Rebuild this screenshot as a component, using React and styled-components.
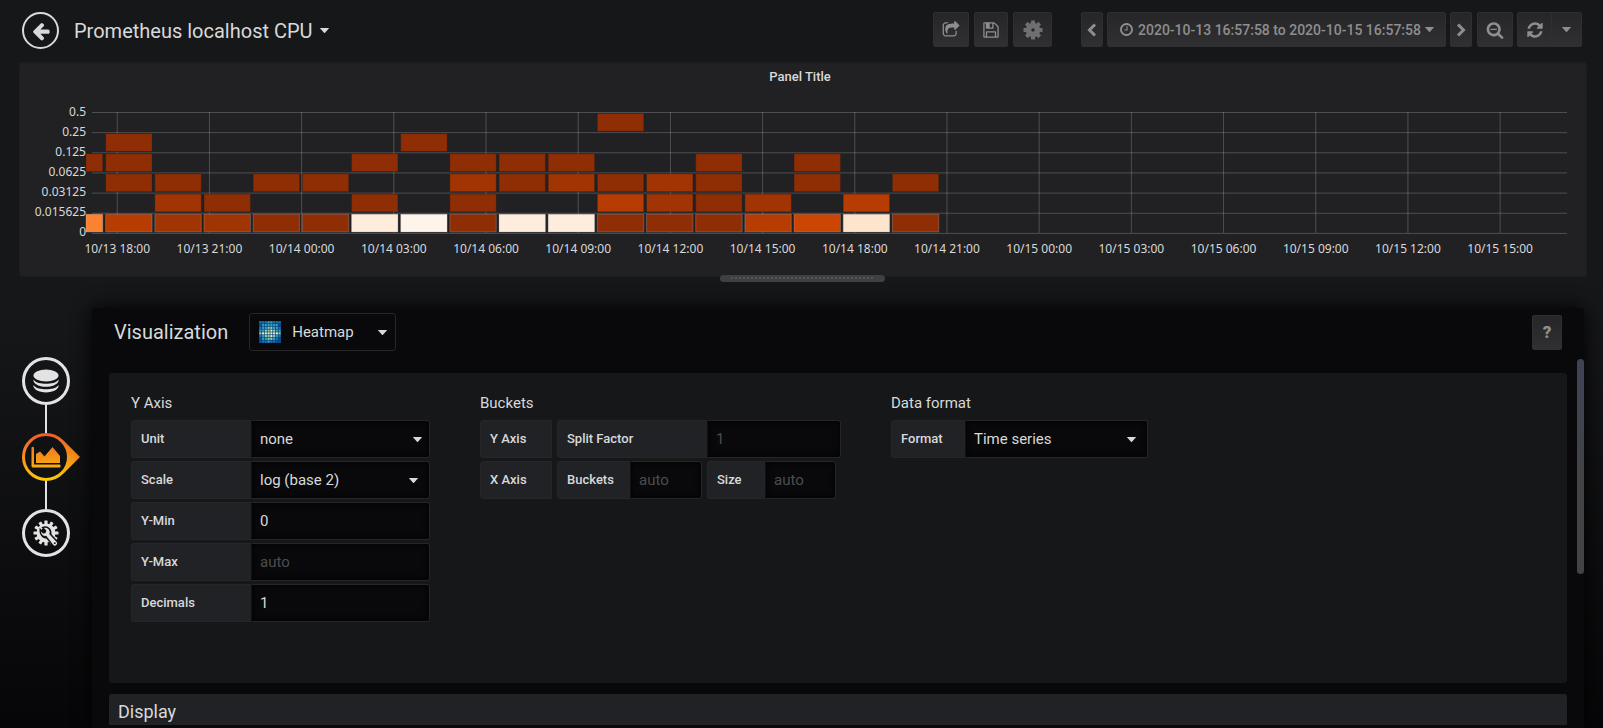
import React from "react";
import styled, { createGlobalStyle, css } from "styled-components";

const GlobalStyle = createGlobalStyle`
  *, *::before, *::after {
    box-sizing: border-box;
  }
  body {
    margin: 0;
    background: #161719;
    color: #d8d9da;
    font-family: Roboto, "Liberation Sans", sans-serif;
    font-size: 13px;
  }
  button, input, select {
    font-family: inherit;
    margin: 0;
  }
`;

const Page = styled.div`
  min-height: 100vh;
  display: flex;
  flex-direction: column;
`;

/* toolbar */

const Toolbar = styled.header`
  display: flex;
  align-items: flex-start;
  padding: 12px 21px 13px 22px;
`;

const BackButton = styled.button`
  width: 37px;
  height: 37px;
  padding: 0;
  display: flex;
  align-items: center;
  justify-content: center;
  border: 2px solid #d8d9da;
  border-radius: 50%;
  background: transparent;
  color: #d8d9da;
`;

const DashboardTitle = styled.button`
  display: flex;
  align-items: center;
  gap: 7px;
  height: 37px;
  margin-left: 15px;
  padding: 0;
  border: 0;
  background: transparent;
  color: #d8d9da;
  font-size: 20px;
`;

const ToolbarActions = styled.div`
  display: flex;
  gap: 5px;
  margin-left: auto;
`;

const TimeControls = styled.div`
  display: flex;
  gap: 4px;
  margin-left: 24px;
`;

const RefreshControls = styled.div`
  display: flex;
  gap: 4px;
`;

const ToolButton = styled.button`
  display: flex;
  align-items: center;
  justify-content: center;
  gap: 4px;
  height: 35px;
  width: ${({ $width }) => ($width ? `${$width}px` : "auto")};
  padding: 0;
  border: 1px solid #2f2f32;
  border-radius: 2px;
  background: linear-gradient(180deg, #262628, #303032);
  color: #8e8e8e;
  font-size: 14px;
  font-weight: 500;

  svg {
    flex: none;
  }
`;

const ButtonGroup = styled.div`
  display: flex;

  ${ToolButton}:first-child {
    border-radius: 2px 0 0 2px;
  }
  ${ToolButton}:last-child {
    border-left: 0;
    border-radius: 0 2px 2px 0;
  }
`;

/* graph panel */

const Panel = styled.section`
  position: relative;
  margin: 0 16px 0 19px;
  padding: 5px 19px 5px 13px;
  border: 1px solid #1d1d1f;
  border-radius: 3px;
  background: #212124;
`;

const PanelTitle = styled.h2`
  margin: 0 0 16px;
  font-size: 13px;
  font-weight: 500;
  line-height: 18px;
  text-align: center;
`;

const Chart = styled.div`
  display: flex;
  font-family: "Noto Sans", "Open Sans", sans-serif;
  font-size: 12px;
`;

const YLabels = styled.div`
  display: flex;
  flex-direction: column;
  width: 53px;
  line-height: 20px;
  text-align: right;
`;

const Plot = styled.svg`
  flex: 1;
  min-width: 0;
  height: 159px;
  margin-top: 10px;
  overflow: visible;

  text {
    fill: #d8d9da;
    text-anchor: middle;
  }
  line {
    stroke: #d8d9da;
    stroke-opacity: 0.25;
  }
`;

const ResizeHandle = styled.div`
  position: absolute;
  left: 50%;
  bottom: -6px;
  width: 165px;
  height: 7px;
  margin-left: -83px;
  padding: 2px 11px;
  border-radius: 4px;
  background: #3f4042;

  &::before {
    content: "";
    display: block;
    height: 2px;
    background: repeating-linear-gradient(90deg, #545557 0 2px, transparent 2px 4px);
  }
`;

/* editor */

const Editor = styled.main`
  flex: 1;
  display: flex;
  margin-top: 31px;
  background: linear-gradient(180deg, #161719, #060608);
`;

const Rail = styled.nav`
  width: 92px;
  padding: 49px 0 0 22px;
  display: flex;
  flex-direction: column;
`;

const RailLine = styled.span`
  width: 2px;
  height: 28px;
  margin-left: 23px;
  background: #e3e3e3;
`;

const RailButton = styled.button`
  position: relative;
  width: 48px;
  height: 48px;
  padding: 0;
  display: flex;
  align-items: center;
  justify-content: center;
  border: ${({ $active }) => ($active ? "0" : "3px solid #e3e3e3")};
  border-radius: 50%;
  background: transparent;
  color: #e3e3e3;

  svg {
    flex: none;
  }
`;

const ActiveMark = styled.svg`
  position: absolute;
  left: 0;
  top: 0;
`;

const EditorBody = styled.div`
  position: relative;
  flex: 1;
  min-width: 0;
  margin-right: 19px;
  padding: 5px 17px 2px;
  border-radius: 3px 3px 0 0;
  background: #09090b;
  box-shadow: 0 0 20px #000;
`;

const EditorHeader = styled.div`
  display: flex;
  align-items: center;
  height: 38px;
  margin-bottom: 22px;
  padding: 0 5px;
`;

const EditorTitle = styled.h1`
  margin: 0;
  font-size: 20px;
  font-weight: 400;
`;

const VizPicker = styled.button`
  display: flex;
  align-items: center;
  width: 147px;
  height: 38px;
  margin-left: 21px;
  padding: 0 8px;
  border: 1px solid #262628;
  border-radius: 3px;
  background: #09090b;
  color: #d8d9da;
  font-size: 15px;

  span {
    flex: 1;
    margin-left: 10px;
    text-align: left;
  }
`;

const HelpButton = styled(ToolButton)`
  margin-left: auto;
  font-size: 17px;
  font-weight: 900;
`;

const ScrollThumb = styled.div`
  position: absolute;
  top: 51px;
  right: 0;
  width: 7px;
  height: 215px;
  border-radius: 4px;
  background: linear-gradient(180deg, #404357, #424345 60%);
`;

const OptionsBox = styled.section`
  display: flex;
  flex-wrap: wrap;
  align-items: flex-start;
  gap: 24px 50px;
  padding: 20px 22px 61px;
  border-radius: 3px;
  background: #161719;
`;

const Group = styled.fieldset`
  display: flex;
  flex-direction: column;
  gap: 3px;
  min-width: 0;
  margin: 0;
  padding: 0;
  border: 0;
`;

const GroupTitle = styled.legend`
  margin-bottom: 7px;
  padding: 0;
  font-size: 15px;
  line-height: 20px;
`;

const Row = styled.div`
  display: flex;
  gap: 5px;
`;

const Field = styled.div`
  display: flex;
  height: 38px;
`;

const labelStyle = css`
  width: ${({ $width }) => $width}px;
  height: 38px;
  padding-left: 9px;
  border: 1px solid #262628;
  border-radius: 3px 0 0 3px;
  background: #212226;
  font-size: 13px;
  font-weight: 500;
  line-height: 36px;
`;

const FieldLabel = styled.label`
  ${labelStyle}
  border-right: 0;
`;

const RowLabel = styled.span`
  ${labelStyle}
`;

const controlStyle = css`
  width: ${({ $width }) => $width}px;
  height: 38px;
  padding: 0 8px;
  border: 1px solid #262628;
  border-left-color: #111113;
  border-radius: 0 3px 3px 0;
  outline: 0;
  background: #09090b;
  box-shadow: inset 0 0 6px #000;
  color: #d8d9da;
  font-size: 15px;
`;

const TextInput = styled.input`
  ${controlStyle}

  &::placeholder {
    color: #4c4d50;
    opacity: 1;
  }
`;

const Select = styled.select`
  ${controlStyle}
  appearance: none;
`;

const SelectWrap = styled.div`
  position: relative;

  svg {
    position: absolute;
    right: ${({ $inset }) => $inset}px;
    top: 17px;
    pointer-events: none;
  }
`;

const SectionBar = styled.button`
  display: block;
  width: 100%;
  height: 31px;
  margin-top: 11px;
  padding: 4px 9px 0;
  border: 0;
  border-radius: 3px 3px 0 0;
  background: #212226;
  color: #d8d9da;
  font-size: 18px;
  line-height: 26px;
  text-align: left;
`;

/* icons */

const icons = {
  arrowLeft:
    "M1664 896v128q0 53-32.5 90.5t-84.5 37.5h-704l293 294q38 36 38 90t-38 90l-75 76q-37 37-90 37-52 0-91-37l-651-652q-37-37-37-90 0-52 37-91l651-650q38-38 91-38 52 0 90 38l75 74q38 38 38 91t-38 91l-293 293h704q52 0 84.5 37.5t32.5 90.5z",
  share:
    "M1472 989v259q0 119-84.5 203.5t-203.5 84.5h-832q-119 0-203.5-84.5t-84.5-203.5v-832q0-119 84.5-203.5t203.5-84.5h255q13 0 22.5 9.5t9.5 22.5q0 27-26 32-77 26-133 60-10 4-16 4h-112q-66 0-113 47t-47 113v832q0 66 47 113t113 47h832q66 0 113-47t47-113v-214q0-19 18-29 28-13 54-37 16-16 35-8 21 9 21 29zm237-496l-384 384q-18 19-45 19-12 0-25-5-39-17-39-59v-192h-160q-323 0-438 131-119 137-74 473 3 23-20 34-8 2-12 2-16 0-26-13-10-14-21-31t-39.5-68.5-49.5-99.5-38.5-114-17.5-122q0-49 3.5-91t14-90 28-88 47-81.5 68.5-74 94.5-61.5 124.5-48.5 159.5-30.5 196.5-11h160v-192q0-42 39-59 13-5 25-5 26 0 45 19l384 384q19 19 19 45t-19 45z",
  save:
    "M512 1536h768v-384h-768v384zm896 0h128v-896q0-14-10-38.5t-20-34.5l-281-281q-10-10-34-20t-39-10v416q0 40-28 68t-68 28h-576q-40 0-68-28t-28-68v-416h-128v1280h128v-416q0-40 28-68t68-28h832q40 0 68 28t28 68v416zm-384-928v-320q0-13-9.5-22.5t-22.5-9.5h-192q-13 0-22.5 9.5t-9.5 22.5v320q0 13 9.5 22.5t22.5 9.5h192q13 0 22.5-9.5t9.5-22.5zm640 32v928q0 40-28 68t-68 28h-1344q-40 0-68-28t-28-68v-1344q0-40 28-68t68-28h928q40 0 88 20t76 48l280 280q28 28 48 76t20 88z",
  clock:
    "M1024 544v448q0 14-9 23t-23 9h-320q-14 0-23-9t-9-23v-64q0-14 9-23t23-9h224v-352q0-14 9-23t23-9h64q14 0 23 9t9 23zm416 352q0-148-73-273t-198-198-273-73-273 73-198 198-73 273 73 273 198 198 273 73 273-73 198-198 73-273zm224 0q0 209-103 385.5t-279.5 279.5-385.5 103-385.5-103-279.5-279.5-103-385.5 103-385.5 279.5-279.5 385.5-103 385.5 103 279.5 279.5 103 385.5z",
  zoomOut:
    "M1088 800v64q0 13-9.5 22.5t-22.5 9.5h-576q-13 0-22.5-9.5t-9.5-22.5v-64q0-13 9.5-22.5t22.5-9.5h576q13 0 22.5 9.5t9.5 22.5zm128 32q0-185-131.5-316.5t-316.5-131.5-316.5 131.5-131.5 316.5 131.5 316.5 316.5 131.5 316.5-131.5 131.5-316.5zm512 832q0 53-37.5 90.5t-90.5 37.5q-54 0-90-38l-343-342q-179 124-399 124-143 0-273.5-55.5t-225-150-150-225-55.5-273.5 55.5-273.5 150-225 225-150 273.5-55.5 273.5 55.5 225 150 150 225 55.5 273.5q0 220-124 399l343 343q37 37 37 90z",
  refresh:
    "M1639 1056q0 5-1 7-64 268-268 434.5t-478 166.5q-146 0-282.5-55t-243.5-157l-129 129q-19 19-45 19t-45-19-19-45v-448q0-26 19-45t45-19h448q26 0 45 19t19 45-19 45l-137 137q71 66 161 102t187 36q134 0 250-65t186-179q11-17 53-117 8-23 30-23h192q13 0 22.5 9.5t9.5 22.5zm25-800v448q0 26-19 45t-45 19h-448q-26 0-45-19t-19-45 19-45l138-138q-148-137-349-137-134 0-250 65t-186 179q-11 17-53 117-8 23-30 23h-199q-13 0-22.5-9.5t-9.5-22.5v-7q65-268 270-434.5t480-166.5q146 0 284 55.5t245 156.5l130-129q19-19 45-19t45 19 19 45z",
};

const Icon = ({ name, size = 18 }) => (
  <svg width={size} height={size} viewBox="0 0 1792 1792" fill="currentColor" aria-hidden="true">
    <path d={icons[name]} />
  </svg>
);

const Caret = () => (
  <svg width="9" height="5" viewBox="0 0 9 5" fill="currentColor" aria-hidden="true">
    <path d="M0.5 0h8q.7 0 .3.6L5 4.7q-.5.5-1 0L.2.6Q-.2 0 .5 0z" />
  </svg>
);

const Chevron = ({ flip }) => (
  <svg width="10" height="14" viewBox="0 0 10 14" fill="none" stroke="currentColor" strokeWidth="3" aria-hidden="true">
    <path d={flip ? "M2 1.500L7.500 7L2 12.500" : "M8 1.500L2.500 7L8 12.500"} />
  </svg>
);

const Teeth = ({ count, inner, outer, width }) =>
  Array.from({ length: count }, (_, i) => (
    <rect
      key={i}
      x={-width / 2}
      y={-outer}
      width={width}
      height={outer - inner + 1}
      rx="0.6"
      transform={`rotate(${(360 / count) * i})`}
    />
  ));

const CogIcon = () => (
  <svg width="20" height="20" viewBox="-10 -10 20 20" fill="#6f6f70" aria-hidden="true">
    <circle r="4.500" fill="none" stroke="#6f6f70" strokeWidth="5.500" />
    <Teeth count={8} inner={6.5} outer={9.5} width={4} />
  </svg>
);

const DatabaseIcon = () => (
  <svg width="26" height="24" viewBox="0 0 26 24" fill="currentColor" aria-hidden="true">
    <ellipse cx="13" cy="6.500" rx="12.500" ry="6" />
    <path d="M.5 10.500C3 14 8 14.800 13 14.800S23 14 25.500 10.500V12.300C24 16 18.500 17.800 13 17.800S2 16 .5 12.300z" />
    <path d="M.5 16C3 19.500 8 20.300 13 20.300S23 19.500 25.500 16V17.800C24 21.500 18.500 23.400 13 23.400S2 21.500 .5 17.800z" />
  </svg>
);

const WrenchCogIcon = () => (
  <svg width="28" height="28" viewBox="-14 -14 28 28" fill="currentColor" aria-hidden="true">
    <circle r="7.500" fill="none" stroke="currentColor" strokeWidth="4" />
    <Teeth count={12} inner={9} outer={12.5} width={3.2} />
    <path
      d="M-5 -1.500a4.300 4.300 0 0 0 5.200 4.300L7.200 11.800a2.200 2.200 0 0 0 3.400 -2.800L3.200 1A4.300 4.300 0 0 0 -2 -5L.4 -2.400L-.6 .3L-3 .6z"
      stroke="#111214"
      strokeWidth="3"
      paintOrder="stroke"
    />
    <circle cx="8.800" cy="10.200" r="0.900" fill="#111214" />
  </svg>
);

const GraphMark = () => (
  <ActiveMark width="59" height="48" viewBox="0 0 59 48" fill="url(#active)" aria-hidden="true">
    <defs>
      <linearGradient id="active" gradientUnits="userSpaceOnUse" x1="0" y1="0" x2="0" y2="48">
        <stop offset="0" stopColor="#f05a28" />
        <stop offset="1" stopColor="#fbca0a" />
      </linearGradient>
    </defs>
    <circle cx="24" cy="24" r="22.500" fill="none" stroke="url(#active)" strokeWidth="3" />
    <path d="M41 7L58 24L41 41Q46 33 46 24T41 7z" />
    <path d="M9.500 14.500Q11 13 12 14.500V31.500H38Q39.500 33 38 34.500H11Q9.500 34.500 9.500 33z" />
    <path d="M14 30V21L18 18.500L22.500 23.500L30.500 14L38 23V30z" />
  </ActiveMark>
);

// brightness per tile, 0 = dark blue, 4 = pale
const tiles = [
  "11122111",
  "02222220",
  "12233221",
  "22334322",
  "34444443",
  "12334321",
  "02233210",
  "01121100",
];
const tileColors = ["#08519c", "#1b73ad", "#3aa0bd", "#8fd0b4", "#e6f0bb"];

const HeatmapIcon = () => (
  <svg width="24" height="22" viewBox="0 0 24 22" aria-hidden="true">
    <rect x="1" width="22" height="22" fill="#07427e" />
    {tiles.map((line, y) =>
      [...line].map((level, x) => (
        <rect
          key={`${x}-${y}`}
          x={1.3 + x * 2.75}
          y={0.3 + y * 2.75}
          width="2.100"
          height="2.100"
          fill={tileColors[level]}
        />
      ))
    )}
  </svg>
);

/* heatmap data */

const yTicks = ["0.5", "0.25", "0.125", "0.0625", "0.03125", "0.015625", "0"];

const xTicks = [
  "10/13 18:00",
  "10/13 21:00",
  "10/14 00:00",
  "10/14 03:00",
  "10/14 06:00",
  "10/14 09:00",
  "10/14 12:00",
  "10/14 15:00",
  "10/14 18:00",
  "10/14 21:00",
  "10/15 00:00",
  "10/15 03:00",
  "10/15 06:00",
  "10/15 09:00",
  "10/15 12:00",
  "10/15 15:00",
];

const palette = {
  a: "#8f2d04",
  b: "#a13403",
  c: "#b63c02",
  d: "#cc4503",
  e: "#fa8331",
  f: "#fde5cd",
  g: "#feecdc",
  h: "#fff4ea",
};

// one string per time bucket, highest value bucket first
const columns = [
  "..a..e",
  ".aaa.c",
  "...abb",
  "....ab",
  "...a.a",
  "...a.a",
  "..a.ag",
  ".a...h",
  "..abaa",
  "..aa.g",
  "..ab.g",
  "a..aca",
  "...bba",
  "..aaaa",
  "....bc",
  "..aa.d",
  "....cf",
  "...a.a",
];

const ROW = 20.15;
const HOUR = 2.075;
const BUCKET = HOUR * 1.6;
const FIRST_BUCKET = 1.33;
const FIRST_TICK = 2.11;

function Heatmap() {
  return (
    <Chart>
      <YLabels>
        {yTicks.map((tick) => (
          <span key={tick}>{tick}</span>
        ))}
      </YLabels>
      <Plot role="img" aria-label="CPU heatmap">
        {yTicks.map((tick, i) => (
          <line key={tick} x1="6" x2="100%" y1={i * ROW + 0.5} y2={i * ROW + 0.5} />
        ))}
        {xTicks.map((tick, i) => {
          const x = `${FIRST_TICK + i * HOUR * 3}%`;
          return (
            <g key={tick}>
              <line x1={x} x2={x} y1="0" y2={ROW * 6} />
              <text x={x} y="141">
                {tick}
              </text>
            </g>
          );
        })}
        {columns.map((column, i) =>
          [...column].map((cell, row) =>
            cell === "." ? null : (
              <rect
                key={`${i}-${row}`}
                x={i === 0 ? 0 : `${FIRST_BUCKET + (i - 1) * BUCKET}%`}
                y={row * ROW + 1.5}
                width={i === 0 ? "1.13%" : "3.13%"}
                height="17.700"
                fill={palette[cell]}
                stroke={row === 5 ? "#d8d9da" : "#212124"}
                strokeOpacity="0.25"
              />
            )
          )
        )}
      </Plot>
    </Chart>
  );
}

function SelectField({ id, label, labelWidth, width, inset = 12, value }) {
  return (
    <Field>
      <FieldLabel htmlFor={id} $width={labelWidth}>
        {label}
      </FieldLabel>
      <SelectWrap $inset={inset}>
        <Select id={id} $width={width} defaultValue={value}>
          <option>{value}</option>
        </Select>
        <Caret />
      </SelectWrap>
    </Field>
  );
}

function InputField({ id, label, labelWidth, width, value, placeholder }) {
  return (
    <Field>
      <FieldLabel htmlFor={id} $width={labelWidth}>
        {label}
      </FieldLabel>
      <TextInput id={id} type="text" $width={width} defaultValue={value} placeholder={placeholder} />
    </Field>
  );
}

function App() {
  return (
    <Page>
      <GlobalStyle />
      <Toolbar>
        <BackButton aria-label="Back">
          <Icon name="arrowLeft" size={20} />
        </BackButton>
        <DashboardTitle>
          Prometheus localhost CPU
          <Caret />
        </DashboardTitle>
        <ToolbarActions>
          <ToolButton $width={36} aria-label="Share">
            <Icon name="share" />
          </ToolButton>
          <ToolButton $width={34} aria-label="Save">
            <Icon name="save" />
          </ToolButton>
          <ToolButton $width={39} aria-label="Settings">
            <CogIcon />
          </ToolButton>
          <TimeControls>
            <ToolButton $width={22} aria-label="Earlier">
              <Chevron />
            </ToolButton>
            <ToolButton $width={339}>
              <Icon name="clock" size={15} />
              2020-10-13 16:57:58 to 2020-10-15 16:57:58
              <Caret />
            </ToolButton>
            <ToolButton $width={22} aria-label="Later">
              <Chevron flip />
            </ToolButton>
          </TimeControls>
          <RefreshControls>
            <ToolButton $width={36} aria-label="Zoom out">
              <Icon name="zoomOut" />
            </ToolButton>
            <ButtonGroup>
              <ToolButton $width={35} aria-label="Refresh">
                <Icon name="refresh" />
              </ToolButton>
              <ToolButton $width={30} aria-label="Refresh interval">
                <Caret />
              </ToolButton>
            </ButtonGroup>
          </RefreshControls>
        </ToolbarActions>
      </Toolbar>

      <Panel>
        <PanelTitle>Panel Title</PanelTitle>
        <Heatmap />
        <ResizeHandle />
      </Panel>

      <Editor>
        <Rail>
          <RailButton aria-label="Queries">
            <DatabaseIcon />
          </RailButton>
          <RailLine />
          <RailButton $active aria-label="Visualization">
            <GraphMark />
          </RailButton>
          <RailLine />
          <RailButton aria-label="General">
            <WrenchCogIcon />
          </RailButton>
        </Rail>
        <EditorBody>
          <EditorHeader>
            <EditorTitle>Visualization</EditorTitle>
            <VizPicker>
              <HeatmapIcon />
              <span>Heatmap</span>
              <Caret />
            </VizPicker>
            <HelpButton $width={30}>?</HelpButton>
          </EditorHeader>
          <OptionsBox>
            <Group>
              <GroupTitle>Y Axis</GroupTitle>
              <SelectField id="unit" label="Unit" labelWidth={120} width={179} inset={8} value="none" />
              <SelectField id="scale" label="Scale" labelWidth={120} width={179} value="log (base 2)" />
              <InputField id="ymin" label="Y-Min" labelWidth={120} width={179} value="0" />
              <InputField id="ymax" label="Y-Max" labelWidth={120} width={179} placeholder="auto" />
              <InputField id="decimals" label="Decimals" labelWidth={120} width={179} value="1" />
            </Group>
            <Group>
              <GroupTitle>Buckets</GroupTitle>
              <Row>
                <RowLabel $width={72}>Y Axis</RowLabel>
                <InputField id="split" label="Split Factor" labelWidth={150} width={134} placeholder="1" />
              </Row>
              <Row>
                <RowLabel $width={72}>X Axis</RowLabel>
                <InputField id="buckets" label="Buckets" labelWidth={73} width={72} placeholder="auto" />
                <InputField id="size" label="Size" labelWidth={58} width={71} placeholder="auto" />
              </Row>
            </Group>
            <Group>
              <GroupTitle>Data format</GroupTitle>
              <SelectField id="format" label="Format" labelWidth={74} width={183} value="Time series" />
            </Group>
          </OptionsBox>
          <SectionBar>Display</SectionBar>
          <ScrollThumb />
        </EditorBody>
      </Editor>
    </Page>
  );
}

export default App;
